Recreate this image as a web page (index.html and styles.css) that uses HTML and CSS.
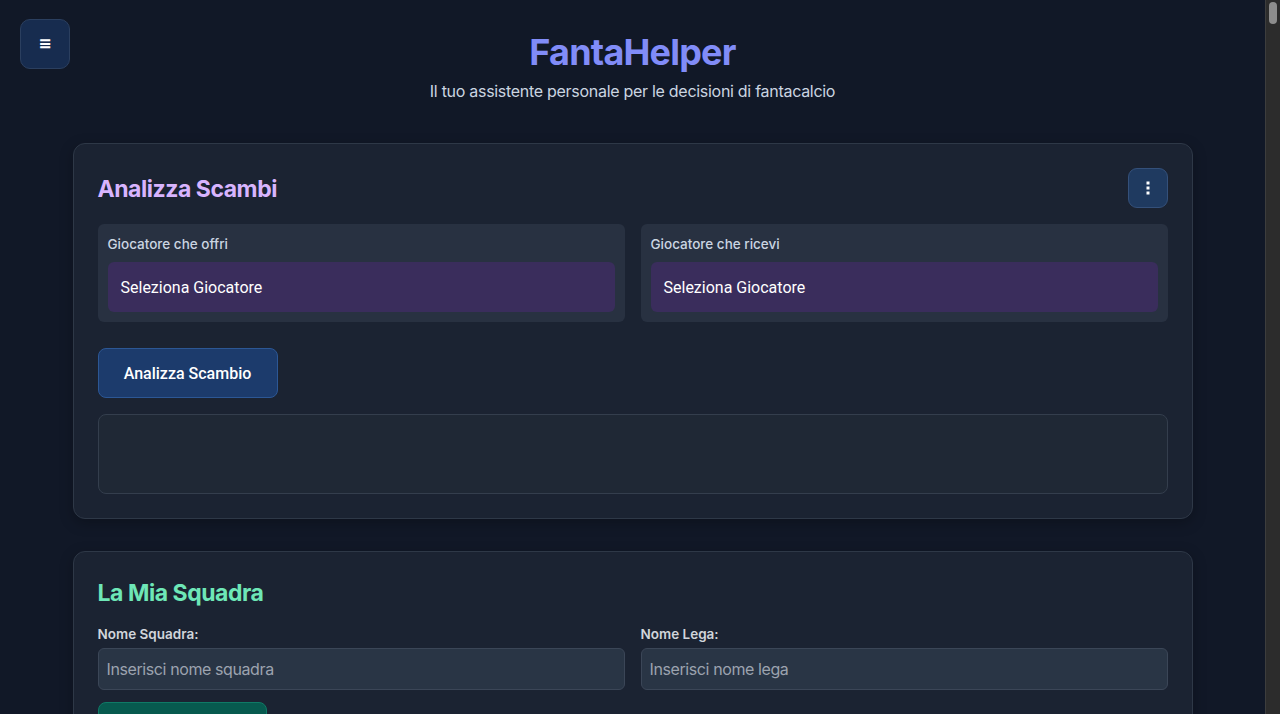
FILE: index.html
```html
<!DOCTYPE html>
<html lang="it">
<head>
<meta charset="utf-8">
<title>FantaHelper</title>
<link rel="stylesheet" href="styles.css">
</head>
<body>
<button class="menu-btn" aria-label="Menu">&#8801;</button>
<header class="header">
  <h1 class="title">FantaHelper</h1>
  <p class="subtitle">Il tuo assistente personale per le decisioni di fantacalcio</p>
</header>
<main class="container">
  <section class="card">
    <div class="card-head">
      <h2 class="card-title purple">Analizza Scambi</h2>
      <button class="kebab" aria-label="Opzioni">
        <svg width="4" height="14" viewBox="0 0 4 14"><rect x="0.5" y="0.5" width="3" height="3" fill="#fff"/><rect x="0.5" y="5.5" width="3" height="3" fill="#fff"/><rect x="0.5" y="10.5" width="3" height="3" fill="#fff"/></svg>
      </button>
    </div>
    <div class="grid">
      <div class="pick">
        <div class="pick-label">Giocatore che offri</div>
        <div class="pick-select">Seleziona Giocatore</div>
      </div>
      <div class="pick">
        <div class="pick-label">Giocatore che ricevi</div>
        <div class="pick-select">Seleziona Giocatore</div>
      </div>
    </div>
    <button class="btn-blue">Analizza Scambio</button>
    <div class="result"></div>
  </section>

  <section class="card">
    <h2 class="card-title green">La Mia Squadra</h2>
    <div class="grid">
      <div class="field">
        <label class="field-label">Nome Squadra:</label>
        <input class="input" type="text" placeholder="Inserisci nome squadra">
      </div>
      <div class="field">
        <label class="field-label">Nome Lega:</label>
        <input class="input" type="text" placeholder="Inserisci nome lega">
      </div>
    </div>
    <button class="btn-green">Salva Squadra</button>
    <div class="spacer"></div>
  </section>
</main>
<div class="scrollbar" aria-hidden="true"><div class="scroll-thumb"></div></div>
</body>
</html>
```
FILE: styles.css
```css
* { box-sizing: border-box; }
html, body {
  margin: 0;
  background: #111827;
  color: #e5e7eb;
  font-family: Inter, "Noto Sans", sans-serif;
}
body {
  min-height: 1400px;
  padding-right: 15px;
}

.scrollbar {
  position: fixed;
  top: 0;
  right: 0;
  width: 15px;
  height: 100vh;
  background: #2c2c2c;
  border-left: 1px solid #3d3d3d;
  padding: 2px 3px 0 3px;
}
.scroll-thumb {
  width: 8px;
  height: 22px;
  border-radius: 4px;
  background: #8d8d8d;
}

.menu-btn {
  position: absolute;
  top: 19px;
  left: 20px;
  width: 50px;
  height: 50px;
  border-radius: 10px;
  background: #172c4f;
  border: 1px solid #2b3f5f;
  color: #fff;
  font-size: 16px;
  font-weight: 700;
  line-height: 1;
  padding: 0;
  font-family: "DejaVu Sans", sans-serif;
}

.header {
  text-align: center;
  padding: 30px 0 40px;
}
.title {
  margin: 0;
  font-size: 36px;
  line-height: 44px;
  font-weight: 700;
  letter-spacing: -0.022em;
  color: #818cf8;
}
.subtitle {
  margin: 5px 0 0;
  font-size: 16px;
  line-height: 24px;
  letter-spacing: -0.018em;
  color: #cbd5e1;
}

.container {
  max-width: 1120px;
  margin: 0 auto;
  display: flex;
  flex-direction: column;
  gap: 32px;
}

.card {
  background: #1b2332;
  border: 1px solid #2e3847;
  border-radius: 12px;
  padding: 24px;
  box-shadow: 0 4px 14px rgba(0,0,0,0.25);
}
.card-head {
  display: flex;
  align-items: center;
  justify-content: space-between;
  height: 40px;
  margin-bottom: 16px;
}
.card-title {
  margin: 0;
  padding-top: 2px;
  font-size: 23px;
  line-height: 32px;
  font-weight: 700;
  letter-spacing: -0.02em;
}
.purple { color: #d8b4fe; }
.green { color: #6ee7b7; margin-bottom: 15px; padding-top: 1px; }

.kebab {
  width: 40px;
  height: 40px;
  border-radius: 9px;
  background: #1f3a60;
  border: 1px solid #34507a;
  display: flex;
  align-items: center;
  justify-content: center;
  padding: 0;
}

.grid {
  display: grid;
  grid-template-columns: 1fr 1fr;
  gap: 16px;
}
.pick {
  background: #283141;
  border-radius: 6px;
  padding: 10px;
}
.pick-label {
  font-size: 13.5px;
  line-height: 20px;
  font-weight: 500;
  color: #cbd5e1;
  margin-bottom: 8px;
}
.pick-select {
  height: 50px;
  background: #3a2d5c;
  border-radius: 6px;
  padding: 0 13px;
  display: flex;
  align-items: center;
  font-family: Roboto, Inter, sans-serif;
  font-size: 16px;
  color: #ffffff;
}

.btn-blue {
  margin-top: 26px;
  width: 180px;
  height: 50px;
  background: #1c3b6c;
  border: 1px solid #2c5795;
  border-radius: 8px;
  color: #fff;
  font-family: Roboto, Inter, sans-serif;
  font-size: 16px;
  font-weight: 500;
}

.result {
  margin-top: 16px;
  height: 80px;
  background: #1f2835;
  border: 1px solid #343e4d;
  border-radius: 8px;
}

.field { display: flex; flex-direction: column; }
.field-label {
  font-size: 13.5px;
  line-height: 20px;
  font-weight: 600;
  color: #d1d5db;
  margin-bottom: 4px;
}
.input {
  height: 42px;
  background: #293545;
  border: 1px solid #3b4657;
  border-radius: 6px;
  padding: 0 8px;
  font-family: Inter, sans-serif;
  font-size: 16px;
  letter-spacing: -0.025em;
  color: #e5e7eb;
  outline: none;
}
.input::placeholder { color: #9ca3af; }

.btn-green {
  margin-top: 12px;
  width: 169px;
  height: 48px;
  background: #075a4f;
  border: 1px solid #0f7a66;
  border-radius: 8px;
  color: #fff;
  font-family: Roboto, Inter, sans-serif;
  font-size: 16px;
  font-weight: 500;
}
.spacer { height: 200px; }
```
